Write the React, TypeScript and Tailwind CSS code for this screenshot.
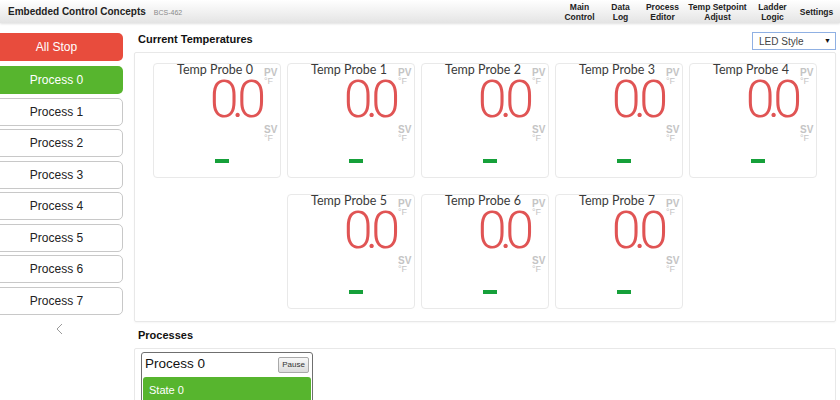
import React from 'react';

const NAV = [
  { w: 'w-[41px]', lines: ['Main', 'Control'] },
  { w: 'w-[41px]', lines: ['Data', 'Log'] },
  { w: 'w-[43px]', lines: ['Process', 'Editor'] },
  { w: 'w-[67px]', lines: ['Temp Setpoint', 'Adjust'] },
  { w: 'w-[43px]', lines: ['Ladder', 'Logic'] },
  { w: 'w-[45px]', lines: ['Settings'] },
];

function ProbeCard({ index }: { index: number }) {
  return (
    <div className="relative h-[115px] w-[128px] rounded-[4px] border border-[#e9e9e9] bg-white">
      <div className="flex h-[12px] justify-center pr-[4px] font-['Lato',sans-serif] text-[12.5px] leading-[12px] text-[#3a3a3a]">
        <span>Temp Probe {index}</span>
      </div>
      <div className="mt-[4px] flex h-[40px] justify-end pr-[21px] font-['Roboto',sans-serif] text-[52px] font-light leading-[40px] tracking-[-7px] text-[#e05454]">
        <span>0.0</span>
      </div>
      <div className="ml-[61px] mt-[39px] h-[4px] w-[14px] bg-[#16a03a]" />
      <div className="absolute right-[4px] top-[4px] flex w-[12px] flex-col font-['Liberation_Sans',sans-serif] text-[10px] font-bold leading-[9px] text-[#c4c4c4]">
        <span>PV</span>
        <span className="text-[9px] font-normal">°F</span>
        <span className="mt-[39px]">SV</span>
        <span className="text-[9px] font-normal">°F</span>
      </div>
    </div>
  );
}

export default function App() {
  const sidebar = [0, 1, 2, 3, 4, 5, 6, 7];

  return (
    <div className="h-[400px] w-[840px] overflow-hidden bg-white font-['Liberation_Sans',sans-serif]">
      <header className="flex h-[23px] items-center justify-between bg-gradient-to-b from-white to-[#e4e4e4] shadow-[0_1px_2px_rgba(0,0,0,0.12)]">
        <div className="flex items-baseline pl-[8px]">
          <span className="text-[10px] font-bold text-[#222]">Embedded Control Concepts</span>
          <span className="ml-[8px] text-[7px] text-[#8a8a8a]">BCS-462</span>
        </div>
        <nav className="flex pr-[1px]">
          {NAV.map((item) => (
            <div
              key={item.lines.join(' ')}
              className={`${item.w} flex flex-col items-center justify-center text-center text-[8.5px] font-bold leading-[10px] text-[#222] whitespace-nowrap`}
            >
              {item.lines.map((l) => (
                <span key={l}>{l}</span>
              ))}
            </div>
          ))}
        </nav>
      </header>

      <div className="flex">
        <aside className="-ml-[10px] flex w-[133px] shrink-0 flex-col pt-[10px]">
          <button className="h-[28px] rounded-[5px] bg-[#e84c3d] text-[12px] text-white">All Stop</button>
          <div className="mt-[5px] flex flex-col gap-[3.5px]">
            {sidebar.map((i) => (
              <button
                key={i}
                className={
                  'h-[28px] rounded-[5px] text-[12px] ' +
                  (i === 0
                    ? 'bg-[#57b52e] text-white'
                    : 'border border-[#c8c8c8] bg-white text-[#222]')
                }
              >
                Process {i}
              </button>
            ))}
          </div>
          <div className="mt-[8px] flex justify-center pl-[5px]">
            <svg width="7" height="12" viewBox="0 0 7 12" fill="none">
              <polyline points="6,1 1,6 6,11" stroke="#9a9a9a" strokeWidth="1" />
            </svg>
          </div>
        </aside>

        <main className="ml-[11px] mr-[4px] flex-1">
          <div className="flex items-start justify-between pb-[2px] pt-[9px]">
            <h2 className="pl-[4px] text-[11px] font-bold leading-[14px] text-[#111]">Current Temperatures</h2>
            <div className="flex h-[18px] w-[84px] items-center justify-between border border-[#8fb0e3] bg-white pl-[6px] pr-[4px] text-[10px] text-[#444]">
              <span>LED Style</span>
              <span className="text-[7px] text-[#111]">▼</span>
            </div>
          </div>

          <section className="flex flex-wrap justify-center gap-x-[6px] gap-y-[16px] rounded-[2px] border border-[#e8e8e8] pb-[12px] pt-[10px] shadow-[0_1px_2px_rgba(0,0,0,0.04)]">
            {[0, 1, 2, 3, 4, 5, 6, 7].map((i) => (
              <ProbeCard key={i} index={i} />
            ))}
          </section>

          <h2 className="mb-[6px] mt-[6px] pl-[4px] text-[11px] font-bold leading-[14px] text-[#111]">Processes</h2>

          <section className="h-[60px] rounded-[2px] border border-[#e8e8e8] pl-[6px] pt-[3px]">
            <div className="w-[172px] rounded-[3px] border-[1.5px] border-[#6f6f6f] bg-white px-[1px]">
              <div className="flex h-[23px] items-center justify-between pl-[2px] pr-[2px]">
                <span className="text-[13.5px] text-[#111]">Process 0</span>
                <span className="flex h-[16px] w-[31px] items-center justify-center rounded-[2px] border border-[#a9a9a9] bg-gradient-to-b from-[#f8f8f8] to-[#dcdcdc] text-[8px] text-[#333]">
                  Pause
                </span>
              </div>
              <div className="mt-[1px] flex h-[30px] items-start rounded-t-[3px] bg-[#57b52e] pl-[6px] pt-[5px] text-[11px] text-white">
                State 0
              </div>
            </div>
          </section>
        </main>
      </div>
    </div>
  );
}
